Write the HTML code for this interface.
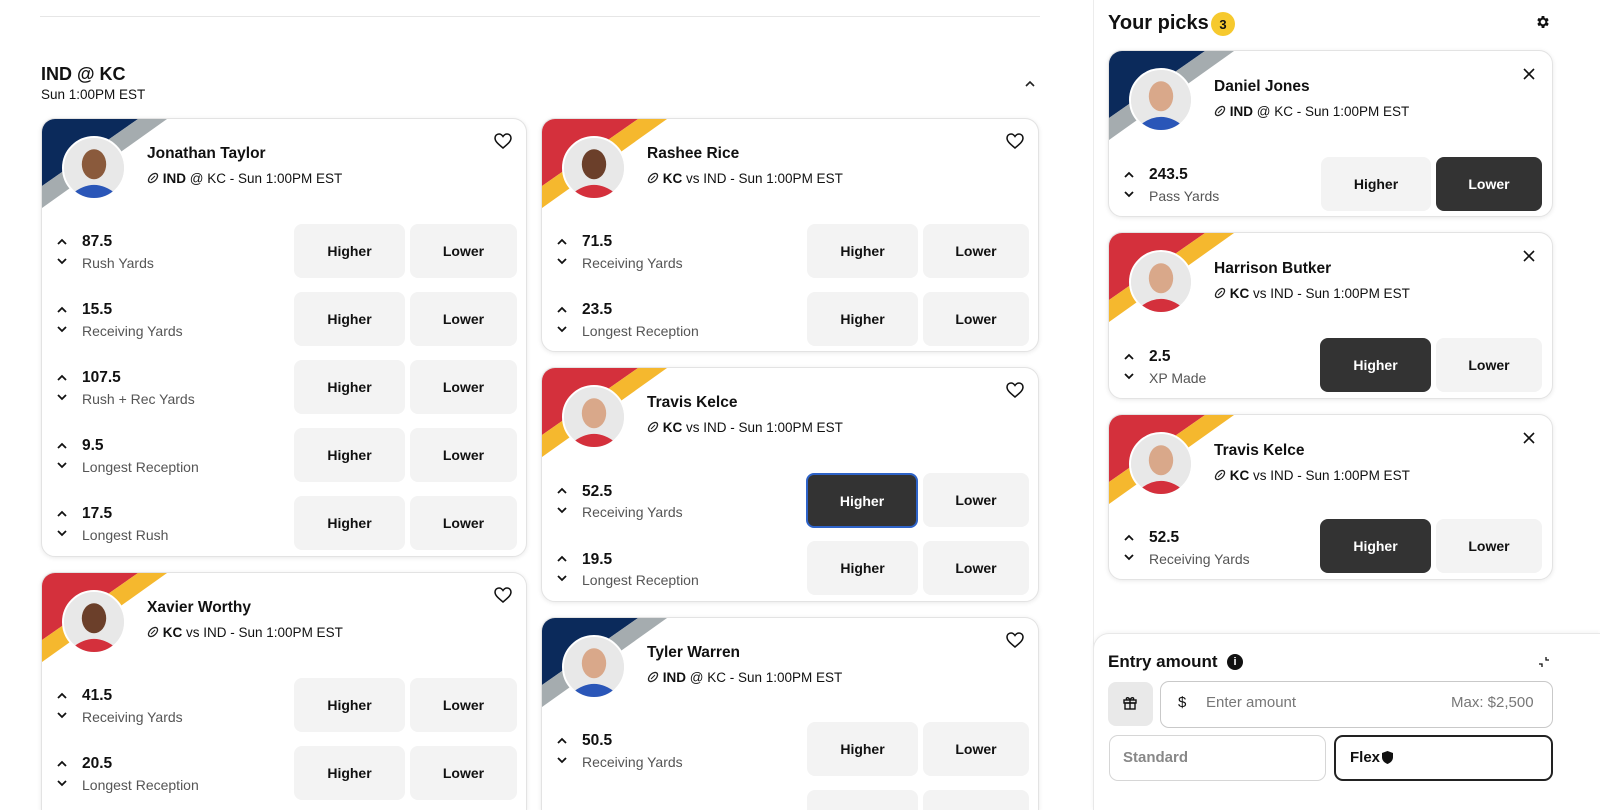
<!DOCTYPE html>
<html style="width:1600px;height:810px;overflow:hidden"><head><meta charset="utf-8"><style>
*{box-sizing:border-box;margin:0;padding:0}
html,body{width:1600px;height:810px;overflow:hidden}
body{background:#fff;font-family:"Liberation Sans",Arial,sans-serif;color:#111;position:relative}
.abs{position:absolute}
.card{position:absolute;background:#fff;border:1px solid #e3e3e3;border-radius:14px;box-shadow:0 1px 5px rgba(0,0,0,.09);overflow:hidden}
.cut{border-bottom:none;border-bottom-left-radius:0;border-bottom-right-radius:0}
.stripe{position:absolute;left:0;top:0}
.av{position:absolute;left:20px;top:17px;width:64px;height:64px;border-radius:50%;background:#e9e9e9;overflow:hidden;border:2px solid #fff}
.nm{position:absolute;left:105px;top:26px;font-weight:bold;font-size:15.5px}
.sub{position:absolute;left:105px;top:52px;font-size:13.5px;white-space:nowrap}
.sub b{font-weight:bold}
.heart{position:absolute;right:14px;top:14px}
.btn{position:absolute;height:54px;border-radius:8px;background:#f3f3f3;font-weight:bold;font-size:14px;display:flex;align-items:center;justify-content:center;color:#111}
.btn.sel{background:#333;color:#fff}
.btn.blue{border:2px solid #2e63c8}
.val{position:absolute;left:40px;font-weight:bold;font-size:15.5px}
.lbl{position:absolute;left:40px;font-size:14px;color:#555}
.chv{position:absolute;left:14px}
</style></head><body>
<div class="abs" style="left:40px;top:16px;width:1000px;height:1px;background:#e6e6e6"></div>
<div class="abs" style="left:41px;top:64px;font-weight:bold;font-size:18px">IND @ KC</div>
<div class="abs" style="left:41px;top:87px;font-size:13.5px">Sun 1:00PM EST</div>
<svg class="abs" style="left:1024px;top:79px" width="12" height="10"><path d="M2 7 L6 3 L10 7" fill="none" stroke="#222" stroke-width="1.6"/></svg>
<div class="abs" style="left:1093px;top:0;width:1px;height:810px;background:#ececec"></div>

<svg width="0" height="0" style="position:absolute">
<defs>
<g id="ind"><polygon points="0,0 96,0 0,67" fill="#0b2a5b"/><polygon points="96,0 125,0 0,89 0,67" fill="#a5acaf"/></g>
<g id="kc"><polygon points="0,0 96,0 0,67" fill="#d4303c"/><polygon points="96,0 125,0 0,89 0,67" fill="#f5b82e"/></g>
<g id="ball"><ellipse cx="6" cy="6" rx="5.5" ry="3.3" transform="rotate(-45 6 6)" fill="none" stroke="#222" stroke-width="1.3"/><path d="M4 8 L8 4" stroke="#222" stroke-width="1.1"/></g>
<g id="up"><path d="M2 7 L6 3 L10 7" fill="none" stroke="#111" stroke-width="1.8"/></g>
<g id="dn"><path d="M2 3 L6 7 L10 3" fill="none" stroke="#111" stroke-width="1.8"/></g>
<g id="hrt"><path d="M9 15 C3 10 1 8 1 5 C1 2.5 3 1 5 1 C6.8 1 8 2 9 3.5 C10 2 11.2 1 13 1 C15 1 17 2.5 17 5 C17 8 15 10 9 15 Z" fill="none" stroke="#111" stroke-width="1.5"/></g>
<g id="pb"><circle cx="32" cy="32" r="32" fill="#e8e8e8"/><ellipse cx="32" cy="28" rx="13" ry="16" fill="#8a5a3c"/><path d="M8 60 Q32 40 56 60 L56 64 L8 64Z" fill="#2a56b8"/></g>
<g id="pr"><circle cx="32" cy="32" r="32" fill="#e8e8e8"/><ellipse cx="32" cy="28" rx="13" ry="16" fill="#6b3f2a"/><path d="M8 60 Q32 40 56 60 L56 64 L8 64Z" fill="#d4303c"/></g>
<g id="pw"><circle cx="32" cy="32" r="32" fill="#e8e8e8"/><ellipse cx="32" cy="28" rx="13" ry="16" fill="#d9a88a"/><path d="M8 60 Q32 40 56 60 L56 64 L8 64Z" fill="#d4303c"/></g>
<g id="pwb"><circle cx="32" cy="32" r="32" fill="#e8e8e8"/><ellipse cx="32" cy="28" rx="13" ry="16" fill="#d9a88a"/><path d="M8 60 Q32 40 56 60 L56 64 L8 64Z" fill="#2a56b8"/></g>
</defs></svg>

<!-- Jonathan Taylor -->
<div class="card" style="left:41px;top:118px;width:486px;height:439px">
<svg class="stripe" width="130" height="95"><use href="#ind"/></svg>
<svg class="av" viewBox="0 0 64 64"><use href="#pb"/></svg>
<div class="nm">Jonathan Taylor</div>
<div class="sub"><svg width="12" height="12" style="vertical-align:-1px"><use href="#ball"/></svg> <b>IND</b> @ KC - Sun 1:00PM EST</div>
<svg class="heart" width="18" height="16"><use href="#hrt"/></svg>
<svg class="chv" style="top:118px" width="12" height="10"><use href="#up"/></svg><svg class="chv" style="top:137px" width="12" height="10"><use href="#dn"/></svg>
<div class="val" style="top:114px">87.5</div><div class="lbl" style="top:136px">Rush Yards</div>
<div class="btn" style="left:252px;top:105px;width:111px">Higher</div><div class="btn" style="left:368px;top:105px;width:107px">Lower</div>
<svg class="chv" style="top:186px" width="12" height="10"><use href="#up"/></svg><svg class="chv" style="top:205px" width="12" height="10"><use href="#dn"/></svg>
<div class="val" style="top:182px">15.5</div><div class="lbl" style="top:204px">Receiving Yards</div>
<div class="btn" style="left:252px;top:173px;width:111px">Higher</div><div class="btn" style="left:368px;top:173px;width:107px">Lower</div>
<svg class="chv" style="top:254px" width="12" height="10"><use href="#up"/></svg><svg class="chv" style="top:273px" width="12" height="10"><use href="#dn"/></svg>
<div class="val" style="top:250px">107.5</div><div class="lbl" style="top:272px">Rush + Rec Yards</div>
<div class="btn" style="left:252px;top:241px;width:111px">Higher</div><div class="btn" style="left:368px;top:241px;width:107px">Lower</div>
<svg class="chv" style="top:322px" width="12" height="10"><use href="#up"/></svg><svg class="chv" style="top:341px" width="12" height="10"><use href="#dn"/></svg>
<div class="val" style="top:318px">9.5</div><div class="lbl" style="top:340px">Longest Reception</div>
<div class="btn" style="left:252px;top:309px;width:111px">Higher</div><div class="btn" style="left:368px;top:309px;width:107px">Lower</div>
<svg class="chv" style="top:390px" width="12" height="10"><use href="#up"/></svg><svg class="chv" style="top:409px" width="12" height="10"><use href="#dn"/></svg>
<div class="val" style="top:386px">17.5</div><div class="lbl" style="top:408px">Longest Rush</div>
<div class="btn" style="left:252px;top:377px;width:111px">Higher</div><div class="btn" style="left:368px;top:377px;width:107px">Lower</div>
</div>

<!-- Xavier Worthy -->
<div class="card cut" style="left:41px;top:572px;width:486px;height:238px">
<svg class="stripe" width="130" height="95"><use href="#kc"/></svg>
<svg class="av" viewBox="0 0 64 64"><use href="#pr"/></svg>
<div class="nm">Xavier Worthy</div>
<div class="sub"><svg width="12" height="12" style="vertical-align:-1px"><use href="#ball"/></svg> <b>KC</b> vs IND - Sun 1:00PM EST</div>
<svg class="heart" width="18" height="16"><use href="#hrt"/></svg>
<svg class="chv" style="top:118px" width="12" height="10"><use href="#up"/></svg><svg class="chv" style="top:137px" width="12" height="10"><use href="#dn"/></svg>
<div class="val" style="top:114px">41.5</div><div class="lbl" style="top:136px">Receiving Yards</div>
<div class="btn" style="left:252px;top:105px;width:111px">Higher</div><div class="btn" style="left:368px;top:105px;width:107px">Lower</div>
<svg class="chv" style="top:186px" width="12" height="10"><use href="#up"/></svg><svg class="chv" style="top:205px" width="12" height="10"><use href="#dn"/></svg>
<div class="val" style="top:182px">20.5</div><div class="lbl" style="top:204px">Longest Reception</div>
<div class="btn" style="left:252px;top:173px;width:111px">Higher</div><div class="btn" style="left:368px;top:173px;width:107px">Lower</div>
</div>

<!-- Rashee Rice -->
<div class="card" style="left:541px;top:118px;width:498px;height:234px">
<svg class="stripe" width="130" height="95"><use href="#kc"/></svg>
<svg class="av" viewBox="0 0 64 64"><use href="#pr"/></svg>
<div class="nm">Rashee Rice</div>
<div class="sub"><svg width="12" height="12" style="vertical-align:-1px"><use href="#ball"/></svg> <b>KC</b> vs IND - Sun 1:00PM EST</div>
<svg class="heart" width="18" height="16"><use href="#hrt"/></svg>
<svg class="chv" style="top:118px" width="12" height="10"><use href="#up"/></svg><svg class="chv" style="top:137px" width="12" height="10"><use href="#dn"/></svg>
<div class="val" style="top:114px">71.5</div><div class="lbl" style="top:136px">Receiving Yards</div>
<div class="btn" style="left:265px;top:105px;width:111px">Higher</div><div class="btn" style="left:381px;top:105px;width:106px">Lower</div>
<svg class="chv" style="top:186px" width="12" height="10"><use href="#up"/></svg><svg class="chv" style="top:205px" width="12" height="10"><use href="#dn"/></svg>
<div class="val" style="top:182px">23.5</div><div class="lbl" style="top:204px">Longest Reception</div>
<div class="btn" style="left:265px;top:173px;width:111px">Higher</div><div class="btn" style="left:381px;top:173px;width:106px">Lower</div>
</div>

<!-- Travis Kelce -->
<div class="card" style="left:541px;top:367px;width:498px;height:235px">
<svg class="stripe" width="130" height="95"><use href="#kc"/></svg>
<svg class="av" viewBox="0 0 64 64"><use href="#pw"/></svg>
<div class="nm">Travis Kelce</div>
<div class="sub"><svg width="12" height="12" style="vertical-align:-1px"><use href="#ball"/></svg> <b>KC</b> vs IND - Sun 1:00PM EST</div>
<svg class="heart" width="18" height="16"><use href="#hrt"/></svg>
<svg class="chv" style="top:118px" width="12" height="10"><use href="#up"/></svg><svg class="chv" style="top:137px" width="12" height="10"><use href="#dn"/></svg>
<div class="val" style="top:115px">52.5</div><div class="lbl" style="top:136px">Receiving Yards</div>
<div class="btn sel blue" style="left:264px;top:105px;width:112px;height:55px">Higher</div><div class="btn" style="left:381px;top:105px;width:106px">Lower</div>
<svg class="chv" style="top:186px" width="12" height="10"><use href="#up"/></svg><svg class="chv" style="top:205px" width="12" height="10"><use href="#dn"/></svg>
<div class="val" style="top:183px">19.5</div><div class="lbl" style="top:204px">Longest Reception</div>
<div class="btn" style="left:265px;top:173px;width:111px">Higher</div><div class="btn" style="left:381px;top:173px;width:106px">Lower</div>
</div>

<!-- Tyler Warren -->
<div class="card cut" style="left:541px;top:617px;width:498px;height:193px">
<svg class="stripe" width="130" height="95"><use href="#ind"/></svg>
<svg class="av" viewBox="0 0 64 64"><use href="#pwb"/></svg>
<div class="nm">Tyler Warren</div>
<div class="sub"><svg width="12" height="12" style="vertical-align:-1px"><use href="#ball"/></svg> <b>IND</b> @ KC - Sun 1:00PM EST</div>
<svg class="heart" width="18" height="16"><use href="#hrt"/></svg>
<svg class="chv" style="top:118px" width="12" height="10"><use href="#up"/></svg><svg class="chv" style="top:137px" width="12" height="10"><use href="#dn"/></svg>
<div class="val" style="top:114px">50.5</div><div class="lbl" style="top:136px">Receiving Yards</div>
<div class="btn" style="left:265px;top:104px;width:111px">Higher</div><div class="btn" style="left:381px;top:104px;width:106px">Lower</div>
<div class="btn" style="left:265px;top:172px;width:111px;height:21px;border-bottom-left-radius:0;border-bottom-right-radius:0"></div><div class="btn" style="left:381px;top:172px;width:106px;height:21px;border-bottom-left-radius:0;border-bottom-right-radius:0"></div>
</div>

<!-- Sidebar -->
<div class="abs" style="left:1108px;top:12px;font-weight:bold;font-size:20px">Your picks</div>
<div class="abs" style="left:1211px;top:12px;width:24px;height:24px;border-radius:50%;background:#f6c92e;font-weight:bold;font-size:13px;display:flex;align-items:center;justify-content:center">3</div>
<svg class="abs" style="left:1535px;top:14px" width="16" height="16" viewBox="0 0 24 24"><path fill="#111" d="M19.4 13a7.5 7.5 0 0 0 0-2l2.1-1.6-2-3.5-2.5 1a7.6 7.6 0 0 0-1.7-1L15 3h-4l-.4 2.9a7.6 7.6 0 0 0-1.7 1l-2.5-1-2 3.5L6.6 11a7.5 7.5 0 0 0 0 2l-2.1 1.6 2 3.5 2.5-1a7.6 7.6 0 0 0 1.7 1L11 21h4l.4-2.9a7.6 7.6 0 0 0 1.7-1l2.5 1 2-3.5zM13 15.5a3.5 3.5 0 1 1 0-7 3.5 3.5 0 0 1 0 7z" transform="translate(-1 0)"/></svg>

<div class="card" style="left:1108px;top:50px;width:445px;height:167px">
<svg class="stripe" width="130" height="95"><use href="#ind"/></svg>
<svg class="av" viewBox="0 0 64 64"><use href="#pwb"/></svg>
<div class="nm" style="top:27px">Daniel Jones</div>
<div class="sub" style="top:53px"><svg width="12" height="12" style="vertical-align:-1px"><use href="#ball"/></svg> <b>IND</b> @ KC - Sun 1:00PM EST</div>
<svg class="abs" style="right:17px;top:17px" width="12" height="12"><path d="M1 1L11 11M11 1L1 11" stroke="#111" stroke-width="1.6"/></svg>
<svg class="chv" style="top:119px" width="12" height="10"><use href="#up"/></svg><svg class="chv" style="top:138px" width="12" height="10"><use href="#dn"/></svg>
<div class="val" style="top:115px">243.5</div><div class="lbl" style="top:137px">Pass Yards</div>
<div class="btn" style="left:212px;top:106px;width:110px">Higher</div><div class="btn sel" style="left:327px;top:106px;width:106px">Lower</div>
</div>

<div class="card" style="left:1108px;top:232px;width:445px;height:167px">
<svg class="stripe" width="130" height="95"><use href="#kc"/></svg>
<svg class="av" viewBox="0 0 64 64"><use href="#pw"/></svg>
<div class="nm" style="top:27px">Harrison Butker</div>
<div class="sub" style="top:53px"><svg width="12" height="12" style="vertical-align:-1px"><use href="#ball"/></svg> <b>KC</b> vs IND - Sun 1:00PM EST</div>
<svg class="abs" style="right:17px;top:17px" width="12" height="12"><path d="M1 1L11 11M11 1L1 11" stroke="#111" stroke-width="1.6"/></svg>
<svg class="chv" style="top:119px" width="12" height="10"><use href="#up"/></svg><svg class="chv" style="top:138px" width="12" height="10"><use href="#dn"/></svg>
<div class="val" style="top:115px">2.5</div><div class="lbl" style="top:137px">XP Made</div>
<div class="btn sel" style="left:211px;top:105px;width:111px">Higher</div><div class="btn" style="left:327px;top:105px;width:106px">Lower</div>
</div>

<div class="card" style="left:1108px;top:414px;width:445px;height:166px">
<svg class="stripe" width="130" height="95"><use href="#kc"/></svg>
<svg class="av" viewBox="0 0 64 64"><use href="#pw"/></svg>
<div class="nm" style="top:27px">Travis Kelce</div>
<div class="sub" style="top:53px"><svg width="12" height="12" style="vertical-align:-1px"><use href="#ball"/></svg> <b>KC</b> vs IND - Sun 1:00PM EST</div>
<svg class="abs" style="right:17px;top:17px" width="12" height="12"><path d="M1 1L11 11M11 1L1 11" stroke="#111" stroke-width="1.6"/></svg>
<svg class="chv" style="top:118px" width="12" height="10"><use href="#up"/></svg><svg class="chv" style="top:137px" width="12" height="10"><use href="#dn"/></svg>
<div class="val" style="top:114px">52.5</div><div class="lbl" style="top:136px">Receiving Yards</div>
<div class="btn sel" style="left:211px;top:104px;width:111px">Higher</div><div class="btn" style="left:327px;top:104px;width:106px">Lower</div>
</div>

<!-- Entry amount -->
<div class="abs" style="left:1093px;top:633px;width:507px;height:177px;border:1px solid #e8e8e8;border-right:none;border-bottom:none;border-top-left-radius:16px;background:#fff;box-shadow:0 -1px 4px rgba(0,0,0,.05)"></div>
<div class="abs" style="left:1108px;top:652px;font-weight:bold;font-size:17px">Entry amount</div>
<div class="abs" style="left:1227px;top:654px;width:16px;height:16px;border-radius:50%;background:#111;color:#fff;font-size:11px;font-weight:bold;text-align:center;line-height:16px">i</div>
<svg class="abs" style="left:1538px;top:656px" width="12" height="12"><path d="M1 8H4V11M11 4H8V1" fill="none" stroke="#111" stroke-width="1.3"/></svg>
<div class="abs" style="left:1108px;top:682px;width:45px;height:44px;border-radius:8px;background:#e9e9e9"></div>
<svg class="abs" style="left:1122px;top:695px" width="16" height="16" viewBox="0 0 16 16"><rect x="2" y="5" width="12" height="3" fill="none" stroke="#111" stroke-width="1.4"/><rect x="3" y="8" width="10" height="6" fill="none" stroke="#111" stroke-width="1.4"/><path d="M8 5V14M8 5C6 1 3 3 5 5M8 5C10 1 13 3 11 5" fill="none" stroke="#111" stroke-width="1.4"/></svg>
<div class="abs" style="left:1160px;top:681px;width:393px;height:47px;border:1px solid #c9c9c9;border-radius:9px"></div>
<div class="abs" style="left:1178px;top:694px;font-size:15px">$</div>
<div class="abs" style="left:1206px;top:694px;font-size:15px;color:#777">Enter amount</div>
<div class="abs" style="left:1451px;top:694px;font-size:15px;color:#777">Max: $2,500</div>
<div class="abs" style="left:1109px;top:735px;width:217px;height:46px;border:1px solid #d6d6d6;border-radius:9px"></div>
<div class="abs" style="left:1123px;top:749px;font-size:15px;font-weight:bold;color:#888">Standard</div>
<div class="abs" style="left:1334px;top:735px;width:219px;height:46px;border:2px solid #222;border-radius:9px"></div>
<div class="abs" style="left:1350px;top:749px;font-size:15px;font-weight:bold">Flex</div>
<svg class="abs" style="left:1381px;top:750px" width="13" height="15" viewBox="0 0 13 15"><path d="M6.5 1L12 3V7C12 11 9 13 6.5 14C4 13 1 11 1 7V3Z" fill="#111"/></svg>
</body></html>
